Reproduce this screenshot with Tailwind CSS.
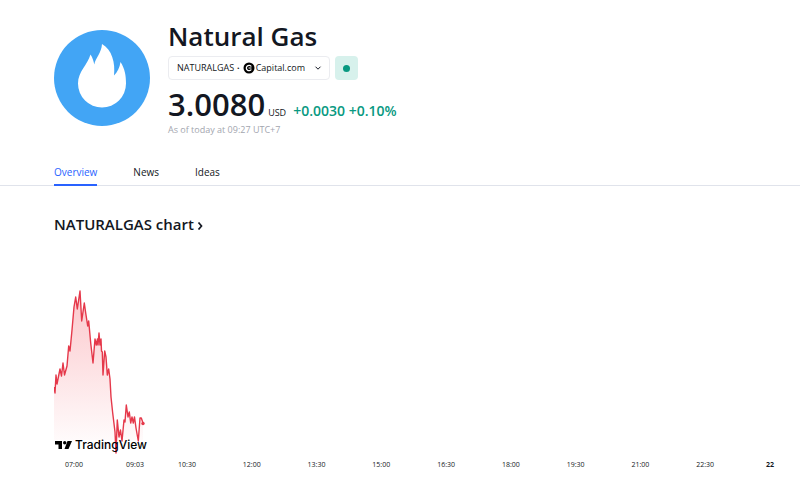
<!DOCTYPE html>
<html lang="en">
<head>
    <meta charset="UTF-8">
    <meta name="viewport" content="width=device-width, initial-scale=1.0">
    <title>Natural Gas</title>
    <script src="https://cdn.jsdelivr.net/npm/@tailwindcss/browser@4"></script>
</head>
<body class="bg-white font-['Open_Sans',sans-serif] text-[#131722]">

    <!-- Symbol header -->
    <header class="flex items-start gap-[18px] px-[54px] pt-[22px]">
        <svg class="mt-2 size-24 shrink-0" viewBox="0 0 96 96" aria-hidden="true">
            <circle cx="48" cy="48" r="48" fill="#42a5f5"/>
            <path fill="#fff" d="M48 14c-.5 9-6.500 14-7.700 20.500C39.500 30.500 38.500 27.500 36.500 24.500 33.500 35 24 41.500 24 53.500a24 24 0 0 0 48 0c0-8-1-14.500-5.500-21.500-.8 5.500-3 10-6.500 13.500C61.500 33 58 19.500 48 14z"/>
        </svg>

        <div>
            <h1 class="text-[26px] leading-7 font-semibold">Natural Gas</h1>
            <div class="mt-1.5 flex gap-[5px]">
                <button type="button" class="flex h-6 w-[162px] items-center rounded border border-[#ebecf0] pl-2 text-[9px]">
                    <span>NATURALGAS</span>
                    <span class="mx-[3px] font-bold">·</span>
                    <svg class="mr-px size-3" viewBox="0 0 12 12" aria-hidden="true">
                        <circle cx="6" cy="6" r="5.500" fill="#000"/>
                        <path d="M8.300 4.500a2.700 2.700 0 1 0 0 3" fill="none" stroke="#fff" stroke-width="1.300"/>
                        <path d="M5.500 6h3" stroke="#fff"/>
                    </svg>
                    <span>Capital.com</span>
                    <svg class="mr-[7px] ml-auto size-2" viewBox="0 0 8 8" fill="none" stroke="#131722" aria-hidden="true">
                        <path d="M1.500 2.700L4 5.200l2.500-2.500"/>
                    </svg>
                </button>
                <button type="button" aria-label="Market open" class="flex h-6 w-[23px] items-center justify-center rounded bg-[#d7f1ec]">
                    <span class="size-[7px] rounded-full bg-[#089981]"></span>
                </button>
            </div>
            <div class="mt-2 flex items-baseline">
                <span class="text-[31px] leading-8 font-semibold">3.0080</span>
                <span class="ml-[3px] text-[9px] leading-3">USD</span>
                <span class="ml-[7px] text-[14px] leading-4 font-semibold text-[#089981]">+0.0030 +0.10%</span>
            </div>
            <p class="mt-1 text-[9px] leading-3 text-[#a3a6af]">As of today at 09:27 UTC+7</p>
        </div>
    </header>

    <!-- Tabs -->
    <nav class="mt-7 flex gap-9 border-b border-[#e0e3eb] px-[54px] text-[10px] leading-4">
        <a href="#" class="-mb-px border-b-2 border-[#2962ff] pb-1 text-[#2962ff]">Overview</a>
        <a href="#">News</a>
        <a href="#">Ideas</a>
    </nav>

    <!-- Chart -->
    <main class="pt-7 pl-[54px]">
        <h2 class="text-[15px] leading-5 font-semibold">
            <a href="#" class="flex items-center gap-[3px]">
                NATURALGAS chart
                <svg class="mt-1 h-2 w-1.5" viewBox="0 0 6 8" fill="none" stroke="#131722" stroke-width="1.700" aria-hidden="true">
                    <path d="M1.500 .5L4.500 4l-3 3.500"/>
                </svg>
            </a>
        </h2>

        <div class="relative mt-[51px]">
            <svg class="h-[172px] w-24" viewBox="54 285 96 172" role="img" aria-label="Natural gas price today">
                <defs>
                    <linearGradient id="fade" x1="0" y1="0" x2="0" y2="1">
                        <stop offset="0" stop-color="#f23645" stop-opacity=".28"/>
                        <stop offset="1" stop-color="#f23645" stop-opacity="0"/>
                    </linearGradient>
                </defs>
                <path id="area" fill="url(#fade)"/>
                <path id="line" fill="none" stroke="#e5384a" stroke-width="1.400" stroke-linejoin="round"/>
                <circle cx="143" cy="423.500" r="1.700" fill="#e5384a"/>
            </svg>
            <a href="#" class="absolute bottom-1 left-0 flex items-center gap-[3px] font-['Inter',sans-serif] text-[12px] leading-4 font-medium text-black">
                <svg class="h-2.5 w-[18px]" viewBox="0 0 18 10" aria-hidden="true">
                    <path d="M1 1h7v8H4.500V4.500H1zM13.500 1H18l-3.500 8h-4z"/>
                    <circle cx="10.700" cy="2.700" r="1.700"/>
                </svg>
                TradingView
            </a>
        </div>

        <div class="flex pt-0.5 pr-5 text-center text-[7px] leading-3">
            <div class="flex w-[123px] shrink-0 justify-between pr-8 pl-[10px]">
                <span class="w-5">07:00</span>
                <span class="w-5">09:03</span>
            </div>
            <div class="flex grow justify-between">
                <span class="w-5">10:30</span>
                <span class="w-5">12:00</span>
                <span class="w-5">13:30</span>
                <span class="w-5">15:00</span>
                <span class="w-5">16:30</span>
                <span class="w-5">18:00</span>
                <span class="w-5">19:30</span>
                <span class="w-5">21:00</span>
                <span class="w-5">22:30</span>
                <span class="w-5 font-bold">22</span>
            </div>
        </div>
    </main>

    <script>
        const points = '54,387 55,393 56,375 57,384 60,369 61.5,376 63,363 64.500,375 67,366 68.700,346 70,351 72,330 74,307 75.700,297 77.300,309 80,291 81.700,321 84.300,303 85.700,313 87.700,326 88.700,321 90.700,343 93,363 95,339 96.300,345 97.500,339 98,345 99,333 100,345 101,339 101.500,351 102.300,352 103,375 104.700,351 106,357 107.300,375 108.700,369 110,379 111,397 112.700,413 115,432 116,453 117.300,420 119,437 120.500,430 122,441 124,420 125,422 126.300,405 128,417 129.300,412 130.700,423 132,417 133.300,423 134.500,417 136,428 138.300,441 140,418 141.300,418 143,423';
        document.getElementById('line').setAttribute('d', 'M' + points);
        document.getElementById('area').setAttribute('d', 'M' + points + ' V440 H54 Z');
    </script>
</body>
</html>
